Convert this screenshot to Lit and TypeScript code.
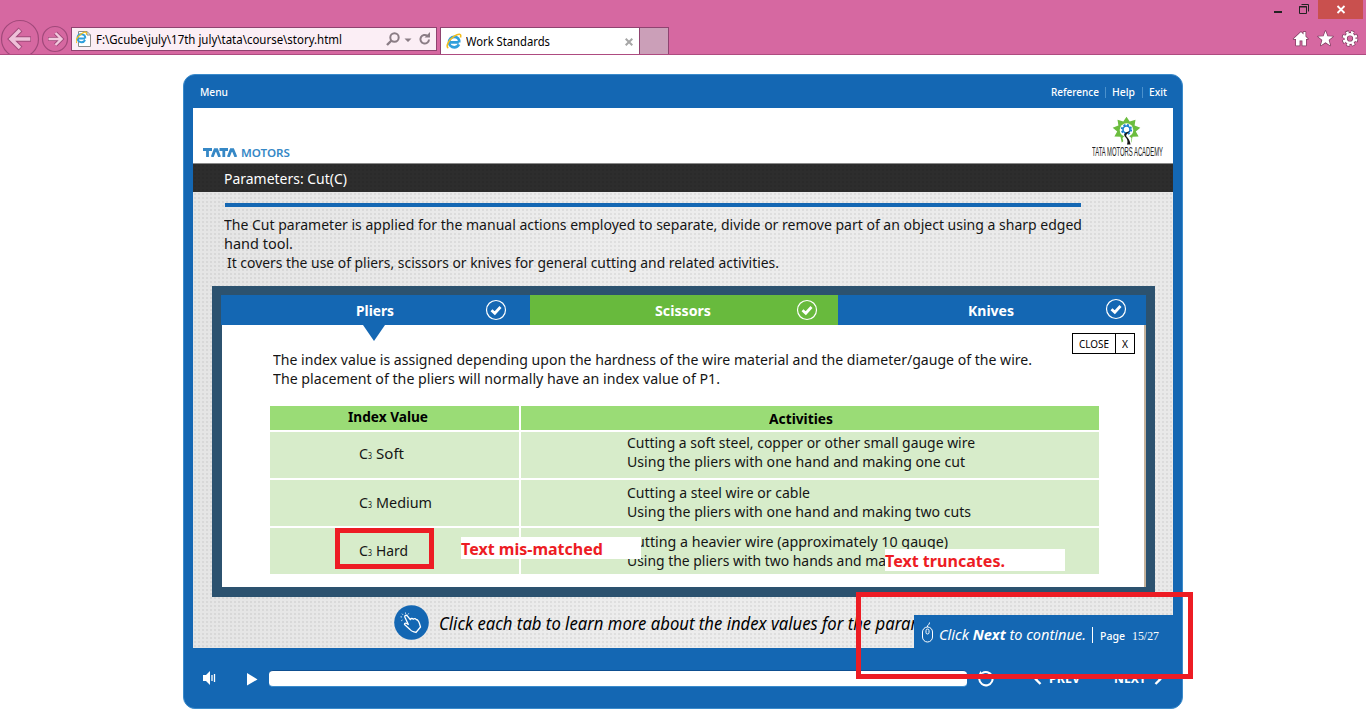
import { LitElement, html, svg, css } from "lit";
import { customElement, property } from "lit/decorators.js";

/** One line of text, condensed or widened to a given width. */
@customElement("fit-line")
class FitLine extends LitElement {
  @property({ type: Number }) w = 0;

  static styles = css`
    :host { display: block; white-space: pre; flex: none; }
    .box { display: block; height: 100%; }
    .run { display: inline-block; transform-origin: 0 50%; white-space: pre; vertical-align: top; }
  `;

  updated() {
    const run = this.renderRoot.querySelector(".run") as HTMLElement;
    const natural = run.offsetWidth ? run.getBoundingClientRect().width : 0;
    if (natural && this.w) run.style.transform = `scaleX(${this.w / natural})`;
  }

  render() {
    return html`<span class="box" style="width:${this.w}px"><span class="run"><slot></slot></span></span>`;
  }
}

const ieLogo = svg`
  <path d="M3.600 9.400h9.200M13 11.400c-1 2-2.700 2.900-4.700 2.900-3 0-5.200-2.200-5.200-5.200s2-5.300 5.200-5.300c3.300 0 5.200 2.400 4.900 5.600" fill="none" stroke="#2f9fdc" stroke-width="2.700"/>
  <path d="M2.300 15C-.8 13.700 2.800 6.700 8.300 3.100c4-2.600 7.500-2.900 6.200 1.300" fill="none" stroke="#f2bd1d" stroke-width="1.600"/>`;

@customElement("app-root")
class AppRoot extends LitElement {
  static styles = css`
    :host {
      display: block; position: relative; width: 1366px; height: 728px; overflow: hidden;
      background: #fff; color: #151515; font: 15px/19px "Noto Sans", "Open Sans", sans-serif;
    }
    * { box-sizing: border-box; }
    svg { display: block; flex: none; }

    .chrome { height: 55px; background: #d668a1; border-bottom: 1px solid #ae4b80; display: flex; position: relative; }
    .nav { width: 71px; height: 54px; overflow: hidden; }
    .address { width: 366px; height: 24px; margin-top: 27px; border: 1px solid #8f4370; background: #fbeef5; display: flex; padding-left: 4px; }
    .address .page { margin-top: 2px; }
    .address fit-line { margin: 2px 0 0 3px; font-size: 12.500px; line-height: 19px; color: #000; width: 246px; }
    .address .tools { margin: 3px 0 0 43px; }
    .tab { width: 200px; height: 27px; margin: 27px 0 0 3px; background: #fff; border: 1px solid #8f4370; border-bottom: 0; display: flex; }
    .tab svg { margin: 5px 0 0 5px; }
    .tab fit-line { margin: 4px 0 0 3px; width: 84px; font-size: 12.500px; line-height: 19px; color: #000; }
    .tab .x { margin: 10px 0 0 75px; }
    .newtab { width: 29px; height: 27px; margin-top: 27px; background: #cb9fb8; border: 1px solid #8f4370; border-width: 1px 1px 0 0; }
    .controls { margin-left: auto; width: 110px; height: 54px; }

    .player { width: 1000px; height: 635px; margin: 19px 0 0 183px; background: #1467b3; border: 1px solid #3b8bcb; border-radius: 12px; padding: 0 9px; }
    .topbar { height: 33px; display: flex; color: #fff; font-size: 11.500px; line-height: 16px; padding: 9px 6px 0 7px; font-weight: 500; }
    .topbar .gap { flex: 1; }
    .topbar i { width: 1px; height: 11px; background: #4b91cc; margin: 3px 6px 0; }
    .topbar i.last { margin-left: 7px; }

    .slide { width: 980px; height: 540px; position: relative; background-color: #e8e8e8;
      background-image: radial-gradient(circle, rgba(0,0,0,.06) 0.800px, transparent 1.200px), linear-gradient(90deg, #e5e5e5 0, #ededed 45%, #e9e9e9 100%);
      background-size: 4px 4px, 100% 100%; }
    .brand { height: 56px; background: #fff; border-bottom: 1px solid #8a8a8a; display: flex; justify-content: space-between; padding: 0 10px; }
    .motors { margin-top: 36px; display: flex; gap: 3px; color: #3688c6; font-size: 11.500px; line-height: 17px; font-weight: 600; }
    .motors svg { margin-top: 4px; }
    .academy { width: 71px; padding-top: 8px; }
    .academy svg { margin-left: 20px; }
    .academy fit-line { font: 12.500px/14px "Liberation Sans", sans-serif; margin-top: -1px; color: #222; }
    .title { height: 28px; background: #2d2d2d; background-image: radial-gradient(circle, #2a2a2a 0.800px, transparent 1.200px); background-size: 4px 4px; color: #fff; padding: 5px 0 0 31px; }
    .rule { width: 856px; height: 4px; margin: 11px 0 0 32px; background: #1467b3; }
    .intro { height: 79px; padding: 8px 0 0 31px; }
    .intro .in { margin-left: 3px; }

    .panel { width: 943px; height: 311px; margin-left: 19px; background: #2c526f; padding: 9px 9px 10px; }
    .tabs { height: 30px; display: grid; grid-template-columns: 309px 308px 308px; }
    .tabs div { background: #1467b3; display: flex; color: #fff; font-weight: 700; }
    .tabs .green { background: #68ba3d; }
    .tabs fit-line { margin-top: 6px; }
    .p1 { padding-left: 135px; }
    .p2 { padding-left: 125px; }
    .p3 { padding-left: 130px; }
    .c1 { margin: 4px 0 0 91px; }
    .c2 { margin: 4px 0 0 85px; }
    .c3 { margin: 3px 0 0 91px; }
    .content { height: 262px; width: 924px; margin-left: 1px; background: #fff; border-right: 2px solid #c5b29b; }
    .upper { height: 81px; display: flex; }
    .assign { width: 850px; padding-left: 51px; }
    .assign .arrow { margin: 0 0 9px 89px; }
    .close { height: 21px; width: 63px; margin-top: 8px; border: 1px solid #000; display: flex; font-size: 11px; line-height: 19px; padding-left: 6px; color: #000; }
    .close i { width: 1px; height: 19px; background: #000; margin: 0 6px; }

    .table { width: 829px; margin-left: 48px; display: grid; grid-template-columns: 249px 578px; grid-template-rows: 24px 46px 46px 46px; gap: 2px; }
    .table div { background: #d7ecca; }
    .table .key { padding: 13px 0 0 89px; display: flex; }
    .table .key.up { padding-top: 12px; }
    .table .head { background: #9adc76; font-weight: 700; color: #000; padding: 1px 0 0 78px; }
    .table .head.wide { padding: 3px 0 0 248px; }
    .table .act { padding: 3px 0 0 106px; }
    .table .act.up { padding-top: 1px; }
    .table .act.down { padding-top: 4px; }
    .sub { font-size: 8px; line-height: 23px; }
    .label { margin-left: 4px; }

    .hint { height: 51px; display: flex; padding: 8px 0 0 201px; overflow: hidden; }
    .hint fit-line { margin: 6px 0 0 10px; font-size: 17.500px; line-height: 25px; font-style: italic; color: #000; }
    .page-strip { position: absolute; right: 0; bottom: 0; width: 259px; height: 33px; background: #1467b3; color: #fff; display: flex; padding: 7px 0 0 7px; }
    .page-strip .next { margin: 2px 0 0 5px; font-style: italic; line-height: 21px; }
    .page-strip i { width: 1px; height: 16px; margin: 5px 7px 0 6px; background: #fff; }
    .page-strip .pg { font-size: 11.500px; line-height: 17px; margin-top: 5px; font-weight: 500; }
    .page-strip .num { font: 12px/17px "Liberation Serif", serif; margin: 6px 0 0 7px; }

    .footer { height: 59px; display: flex; padding-top: 22px; }
    .footer .sound { margin: 0 0 0 9px; }
    .footer .play { margin: 3px 0 0 30px; }
    .progress { width: 698px; height: 17px; margin: 0 0 0 11px; background: #fff; border-radius: 4px; border-top: 1px solid #0d4e90; border-bottom: 1px solid #3b8bcb; }
    .footer .again { margin: 0 0 0 10px; }
    .footer .chev { margin: 4px 7px 0 40px; }
    .footer fit-line { color: #fff; font-size: 12px; line-height: 16px; font-weight: 700; margin-top: 1px; }
    .footer .nx { margin-left: 34px; }
    .footer .chev2 { margin: 4px 0 0 8px; }

    .frame { position: absolute; border: 5px solid #ed1c24; }
    .hard { left: 335px; top: 528px; width: 99px; height: 41px; }
    .bottom { left: 856px; top: 592px; width: 337px; height: 87px; }
    .note { position: absolute; width: 180px; height: 22px; background: #fff; color: #ed1c24; font-weight: 700; font-size: 15.500px; line-height: 24px; }
    .n1 { left: 461px; top: 537px; }
    .n2 { left: 885px; top: 549px; }
  `;

  tick(cls: string) {
    return html`<svg class=${cls} width="22" height="22" viewBox="0 0 22 22">
      <circle cx="11" cy="11" r="9.500" fill="none" stroke="#fff" stroke-width="1.200"/>
      <path d="M6.500 11.200l3.300 3L15.500 8" fill="none" stroke="#fff" stroke-width="2.800"/></svg>`;
  }

  key(name: string, w: number, up = false) {
    return html`<div class=${up ? "key up" : "key"}><fit-line w="9">C</fit-line><fit-line class="sub" w="4">3</fit-line>
      <fit-line class="label" w=${w}>${name}</fit-line></div>`;
  }

  star() {
    const pts: string[] = [];
    for (let i = 0; i < 18; i++) {
      const a = (-90 + i * 20) * Math.PI / 180;
      const r = i % 2 ? 9.4 : 14;
      pts.push(`${(14.5 + Math.cos(a) * r).toFixed(1)},${(14 + Math.sin(a) * r * 0.95).toFixed(1)}`);
    }
    return pts.join(" ");
  }

  render() {
    return html`
      <div class="chrome">
        <svg class="nav" width="71" height="54" viewBox="0 0 71 54">
          <g fill="none" stroke="#a0497a" stroke-width="1.200"><circle cx="20" cy="39" r="18.500"/><circle cx="55" cy="39" r="12.500"/></g>
          <path d="M31 39H11M20.500 29.500L11 39l9.500 9.500" fill="none" stroke="#a0497a" stroke-width="5.500"/>
          <path d="M30.300 39H11M20 30l-9 9 9 9" fill="none" stroke="#eec0d8" stroke-width="3.500"/>
          <path d="M48 39h13M55.500 33l6 6-6 6" fill="none" stroke="#a0497a" stroke-width="4.200"/>
          <path d="M48.500 39h12.500M55.500 33l6 6-6 6" fill="none" stroke="#f2c9de" stroke-width="2.400"/>
        </svg>
        <div class="address">
          <svg class="page" width="17" height="18" viewBox="0 0 17 18">
            <path d="M2.500 1.500h8.500l3.500 3.500v11.500h-12z" fill="#fff" stroke="#8b8b8b"/><path d="M11 1.500v3.500h3.500" fill="none" stroke="#8b8b8b"/>
            <g transform="translate(-.8 1.300) scale(.76)">${ieLogo}</g>
          </svg>
          <fit-line w="246">F:\\Gcube\\july\\17th july\\tata\\course\\story.html</fit-line>
          <svg class="tools" width="48" height="18" viewBox="0 0 48 18">
            <g fill="none" stroke="#8a7d85" stroke-width="2"><circle cx="9.500" cy="6.500" r="4.200"/><path d="M6.500 9.500L2 14" stroke-width="2.400"/>
            <path d="M42.500 5A4.300 4.300 0 1 0 44 8.500"/></g>
            <path d="M19.500 7.500h7l-3.500 3.500zM39.500 6.500h5.500V1z" fill="#8a7d85"/>
          </svg>
        </div>
        <div class="tab">
          <svg width="17" height="17" viewBox="0 0 17 17">${ieLogo}</svg>
          <fit-line w="84">Work Standards</fit-line>
          <svg class="x" width="8" height="8" viewBox="0 0 8 8"><path d="M.7.7l6.600 6.600M7.300.7L.7 7.300" stroke="#a6a6a6" stroke-width="2"/></svg>
        </div>
        <div class="newtab"></div>
        <svg class="controls" width="110" height="54" viewBox="0 0 110 54">
          <path d="M18 11h8v2h-8z" fill="#222"/>
          <path d="M43.500 6.500h7v7h-7zM43 7h8M45.500 4.500h7v7" fill="none" stroke="#222"/>
          <path d="M62 0h45v19H62z" fill="#c9504e"/>
          <path d="M81.500 6l7 7M88.500 6l-7 7" stroke="#fff" stroke-width="1.800"/>
          <g fill="#fff" stroke="#7e3c60" stroke-width="1.400" paint-order="stroke" stroke-linejoin="round">
            <path d="M45 32l2.500 2.400V32h2v4.500l2.500 2.500h-2v6.500h-3.600v-5h-2.800v5H40V39h-2.500z"/>
            <path d="M69.500 31l2 5.300 5.500.2-4.300 3.500 1.500 5.500-4.700-3.200-4.700 3.200 1.500-5.500L62 36.500l5.500-.2z"/>
          </g>
          <g fill="none"><circle cx="94" cy="38.500" r="6.300" stroke="#7e3c60" stroke-width="4" stroke-dasharray="3.100 1.850"/>
          <circle cx="94" cy="38.500" r="4.400" stroke="#7e3c60" stroke-width="4"/>
          <circle cx="94" cy="38.500" r="6.300" stroke="#fff" stroke-width="2.400" stroke-dasharray="2.500 2.450" stroke-dashoffset="-.3"/>
          <circle cx="94" cy="38.500" r="4.300" stroke="#fff" stroke-width="2.400"/></g>
        </svg>
      </div>

      <div class="player">
        <div class="topbar">
          <fit-line w="28">Menu</fit-line><span class="gap"></span>
          <fit-line w="48">Reference</fit-line><i></i><fit-line w="23">Help</fit-line><i class="last"></i><fit-line w="18">Exit</fit-line>
        </div>
        <div class="slide">
          <div class="brand">
            <div class="motors">
              <svg width="35" height="9" viewBox="0 0 35 9"><path d="M0 1.500h9M4.500 1.500V9M9.200 9l2.800-7.300h1.800l2.800 7.300M16.500 1.500H25M20.800 1.500V9M25.300 9l2.800-7.300h1.800l3 7.300" fill="none" stroke="#3688c6" stroke-width="2.800"/></svg>
              <fit-line w="49">MOTORS</fit-line>
            </div>
            <div class="academy">
              <svg width="30" height="30" viewBox="0 0 30 30">
                <polygon points=${this.star()} fill="#6cbd3f"/>
                <circle cx="14.500" cy="14" r="6.800" fill="#fff"/>
                <circle cx="14.500" cy="13.500" r="4.700" fill="none" stroke="#1b80d0" stroke-width="1.800" stroke-dasharray="2 1.690"/>
                <circle cx="14.500" cy="13.500" r="3.500" fill="none" stroke="#1b80d0" stroke-width="1.600"/>
                <path d="M10.500 22l4-4 5 4-1 8h-6z" fill="#fff"/>
                <path d="M18.500 15c-4 1-7 2.500-6 5 2 2.500 4 4 2.500 8.500h3.500c-.5-4-2-6-4-8-1-2 1.500-3.500 4-5.500z" fill="#151515"/>
              </svg>
              <fit-line w="71">TATA MOTORS ACADEMY</fit-line>
            </div>
          </div>
          <div class="title"><fit-line w="123">Parameters: Cut(C)</fit-line></div>
          <div class="rule"></div>
          <div class="intro">
            <fit-line w="858">The Cut parameter is applied for the manual actions employed to separate, divide or remove part of an object using a sharp edged</fit-line>
            <fit-line w="69">hand tool.</fit-line>
            <fit-line class="in" w="552">It covers the use of pliers, scissors or knives for general cutting and related activities.</fit-line>
          </div>
          <div class="panel">
            <div class="tabs">
              <div class="p1"><fit-line w="38">Pliers</fit-line>${this.tick("c1")}</div>
              <div class="p2 green"><fit-line w="56">Scissors</fit-line>${this.tick("c2")}</div>
              <div class="p3"><fit-line w="46">Knives</fit-line>${this.tick("c3")}</div>
            </div>
            <div class="content">
              <div class="upper">
                <div class="assign">
                  <svg class="arrow" width="24" height="16" viewBox="0 0 24 16"><path d="M1 0h22L12 16z" fill="#1467b3"/></svg>
                  <fit-line w="759">The index value is assigned depending upon the hardness of the wire material and the diameter/gauge of the wire.</fit-line>
                  <fit-line w="447">The placement of the pliers will normally have an index value of P1.</fit-line>
                </div>
                <div class="close"><fit-line w="30">CLOSE</fit-line><i></i><fit-line w="6">X</fit-line></div>
              </div>
              <div class="table">
                <div class="head"><fit-line w="80">Index Value</fit-line></div>
                <div class="head wide"><fit-line w="64">Activities</fit-line></div>
                ${this.key("Soft", 28, true)}
                <div class="act up"><fit-line w="348">Cutting a soft steel, copper or other small gauge wire</fit-line><fit-line w="338">Using the pliers with one hand and making one cut</fit-line></div>
                ${this.key("Medium", 56)}
                <div class="act"><fit-line w="183">Cutting a steel wire or cable</fit-line><fit-line w="344">Using the pliers with one hand and making two cuts</fit-line></div>
                ${this.key("Hard", 32)}
                <div class="act down"><fit-line w="321">Cutting a heavier wire (approximately 10 gauge)</fit-line><fit-line w="259">Using the pliers with two hands and ma</fit-line></div>
              </div>
            </div>
          </div>
          <div class="hint">
            <svg width="35" height="35" viewBox="0 0 35 35">
              <circle cx="17.500" cy="17.500" r="17.300" fill="#1467b3"/>
              <path d="M11 12.500c-1-2 1.500-3 2.500-1.300l2.700 3.300c1-1.300 2.300-1.200 3-.4 1.500-.9 2.500-.5 3 .4 2.500.2 3.300 3 4.300 7.500l-4.500 5.500c-2-1-4.500-.5-6-3L10.500 19.500c0-1.800 1.500-1.800 4 .2z" fill="none" stroke="#fff" stroke-width="1.300"/>
              <path d="M8.500 15l-1.300.8M8 12l-1.500-.2M9 9.800L8 8.700M11.500 8.800V7.500M14 9.500l.8-1.200" stroke="#cfe3f4"/>
            </svg>
            <fit-line w="486">Click each tab to learn more about the index values for the param</fit-line>
          </div>
          <div class="page-strip">
            <svg width="13" height="21" viewBox="0 0 13 21"><g fill="none" stroke="#fff"><rect x="1.500" y="5" width="10" height="15" rx="5"/><rect x="5" y="7" width="3" height="5" rx="1.500"/><path d="M6.500 5c-.5-2.500 2-1.500 2-4.500"/></g></svg>
            <fit-line class="next" w="147">Click <b>Next</b> to continue.</fit-line><i></i>
            <fit-line class="pg" w="25">Page</fit-line><fit-line class="num" w="27">15/27</fit-line>
          </div>
        </div>
        <div class="footer">
          <svg class="sound" width="15" height="16" viewBox="0 0 15 16"><path d="M1 5h3l4-4v14l-4-4H1z" fill="#fff"/><path d="M10 5v6M12.500 4v8" stroke="#fff" stroke-width="1.300"/></svg>
          <svg class="play" width="11" height="13" viewBox="0 0 11 13"><path d="M0 0l10.500 6.500L0 12.500z" fill="#fff"/></svg>
          <div class="progress"></div>
          <svg class="again" width="17" height="17" viewBox="0 0 17 17"><path d="M5 3.200A6.700 6.700 0 1 1 2.200 9" fill="none" stroke="#fff" stroke-width="2"/><path d="M1 6l5.500-.5L3.500 1z" fill="#fff"/></svg>
          <svg class="chev" width="8" height="12" viewBox="0 0 8 12"><path d="M6.500 1L2 5.500 6.500 10" fill="none" stroke="#fff" stroke-width="2.400"/></svg>
          <fit-line w="31">PREV</fit-line>
          <fit-line class="nx" w="32">NEXT</fit-line>
          <svg class="chev2" width="8" height="12" viewBox="0 0 8 12"><path d="M1.500 1L6 5.500 1.500 10" fill="none" stroke="#fff" stroke-width="2.400"/></svg>
        </div>
      </div>

      <div class="note n1"><fit-line w="142">Text mis-matched</fit-line></div>
      <div class="note n2"><fit-line w="120">Text truncates.</fit-line></div>
      <div class="frame hard"></div>
      <div class="frame bottom"></div>
    `;
  }
}
